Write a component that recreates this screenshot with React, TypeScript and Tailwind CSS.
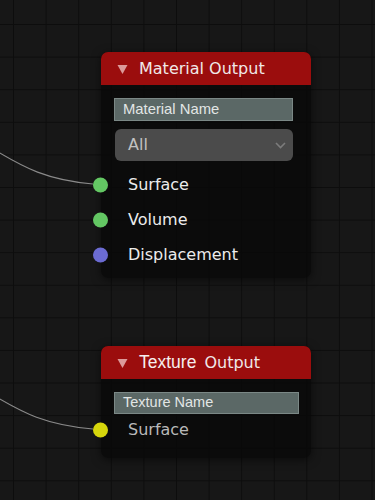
import React from "react";

const dejavu = "font-['DejaVu_Sans',sans-serif]";
const arial = "font-['Liberation_Sans',Arial,sans-serif]";

const Triangle = () => (
  <svg width="11" height="10" viewBox="0 0 11 10" className="shrink-0">
    <polygon points="0.5,1 10.5,1 5.5,10" fill="#dc9a9a" />
  </svg>
);

const Socket = ({ color }: { color: string }) => (
  <span
    className="absolute -left-[8px] top-1/2 h-[15px] w-[15px] -translate-y-1/2 rounded-full"
    style={{ background: color }}
  />
);

const SocketRow = ({
  label,
  color,
  dim,
  h = "h-[35px]",
}: {
  label: string;
  color: string;
  dim?: boolean;
  h?: string;
}) => (
  <div className={`relative flex items-center ${h}`}>
    <Socket color={color} />
    <span
      className={`pl-[27px] text-[16px] ${dejavu} ${dim ? "text-[#b9b9b9]" : "text-[#ececec]"}`}
    >
      {label}
    </span>
  </div>
);

export default function App() {
  return (
    <div className="relative h-[500px] w-[375px] overflow-hidden bg-[#171717] bg-[linear-gradient(to_right,#0d0d0d_1px,transparent_1px),linear-gradient(to_bottom,#0d0d0d_1px,transparent_1px)] bg-[size:32.6px_32.6px] bg-[position:13px_24px]">
      {/* links */}
      <svg className="absolute left-0 top-0" width="375" height="500">
        <path
          d="M-2 152 C 22 166, 45 180, 93 184"
          stroke="#8a8a8a"
          strokeWidth="1.2"
          fill="none"
        />
        <path
          d="M-2 398 C 22 412, 45 425, 93 429"
          stroke="#8a8a8a"
          strokeWidth="1.2"
          fill="none"
        />
      </svg>

      {/* Material Output node */}
      <div className="absolute left-[101px] top-[52px] w-[210px] rounded-[7px] bg-[rgba(9,9,9,0.82)] shadow-[0_2px_10px_rgba(0,0,0,0.55)]">
        <div className="flex h-[33px] items-center gap-[11px] rounded-t-[7px] bg-[#9b0d0d] pl-[16px]">
          <Triangle />
          <span className={`text-[16px] text-[#f0e8e8] ${dejavu}`}>
            Material Output
          </span>
        </div>
        <div className="pb-[6px] pt-[13px]">
          <div
            className={`ml-[13px] flex h-[23px] w-[179px] items-center border border-[#7b8886] bg-[#5b6866] pl-[8px] text-[14.8px] text-[#e2e6e5] ${arial}`}
          >
            Material Name
          </div>
          <div className="ml-[14px] mt-[8px] flex h-[32px] w-[178px] items-center justify-between rounded-[6px] bg-[#4b4b4b] pl-[13px] pr-[7px]">
            <span className={`text-[16px] text-[#c2c2c2] ${dejavu}`}>All</span>
            <svg width="11" height="7" viewBox="0 0 11 7">
              <polyline
                points="1,1 5.5,5.5 10,1"
                stroke="#7c7c7c"
                strokeWidth="1.6"
                fill="none"
              />
            </svg>
          </div>
          <div className="mt-[6px]">
            <SocketRow label="Surface" color="#63c763" />
            <SocketRow label="Volume" color="#63c763" />
            <SocketRow label="Displacement" color="#6b6bd2" />
          </div>
        </div>
      </div>

      {/* Texture Output node */}
      <div className="absolute left-[101px] top-[346px] w-[210px] rounded-[7px] bg-[rgba(9,9,9,0.82)] shadow-[0_2px_10px_rgba(0,0,0,0.55)]">
        <div className="flex h-[33px] items-center gap-[11px] rounded-t-[7px] bg-[#9b0d0d] pl-[16px]">
          <Triangle />
          <span className="flex items-baseline gap-[8px]">
            <span className={`text-[17.5px] text-[#f6eeee] ${arial}`}>Texture</span>
            <span className={`text-[16px] text-[#f0e8e8] ${dejavu}`}>Output</span>
          </span>
        </div>
        <div className="pb-[12px] pt-[13px]">
          <div
            className={`ml-[13px] flex h-[22px] w-[185px] items-center border border-[#7b8886] bg-[#5b6866] pl-[8px] text-[14.5px] text-[#e2e6e5] ${arial}`}
          >
            Texture Name
          </div>
          <SocketRow label="Surface" color="#d6d60c" dim h="h-[32px]" />
        </div>
      </div>
    </div>
  );
}
